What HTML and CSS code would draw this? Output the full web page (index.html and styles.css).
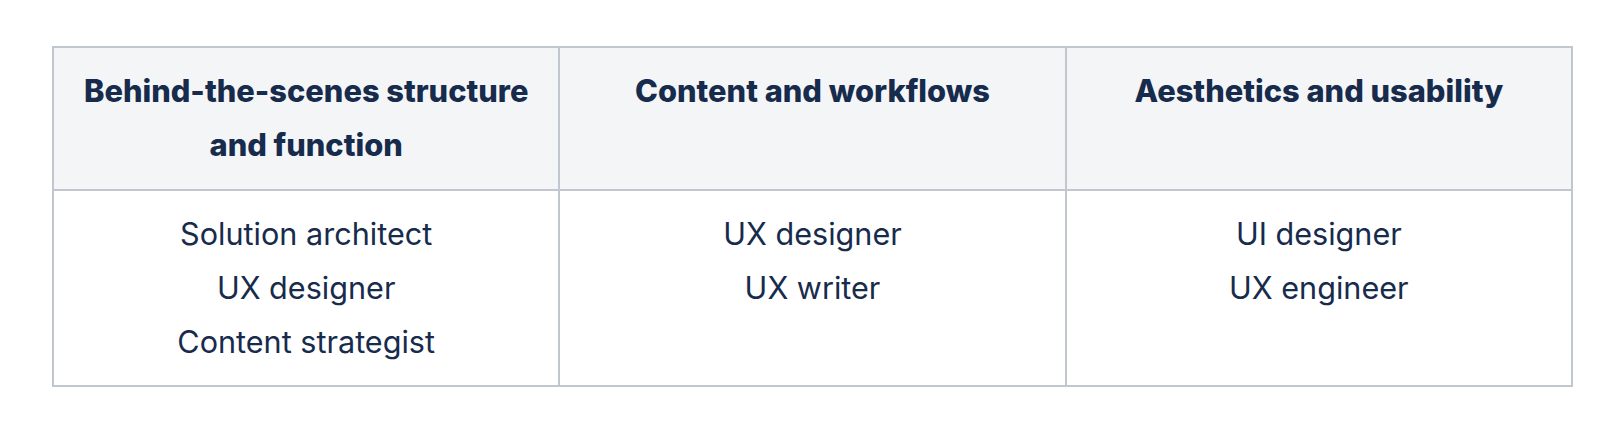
FILE: index.html
```html
<!DOCTYPE html>
<html lang="en">
<head>
<meta charset="utf-8">
<title>Roles table</title>
<link rel="stylesheet" href="styles.css">
</head>
<body>
<div class="page">
  <table class="roles">
    <thead>
      <tr>
        <th>Behind-the-scenes structure and function</th>
        <th>Content and workflows</th>
        <th>Aesthetics and usability</th>
      </tr>
    </thead>
    <tbody>
      <tr>
        <td>
          <p>Solution architect</p>
          <p>UX designer</p>
          <p>Content strategist</p>
        </td>
        <td>
          <p>UX designer</p>
          <p>UX writer</p>
        </td>
        <td>
          <p>UI designer</p>
          <p>UX engineer</p>
        </td>
      </tr>
    </tbody>
  </table>
</div>
</body>
</html>
```

FILE: styles.css
```css
html, body {
  margin: 0;
  padding: 0;
  background: #ffffff;
}

.page {
  padding: 46px 49px 0 52px;
  font-family: Inter, "Noto Sans", "Liberation Sans", sans-serif;
  color: #172b4d;
}

.roles {
  width: 100%;
  border-collapse: collapse;
  table-layout: fixed;
}

.roles th,
.roles td {
  border: 2px solid #c1c7d0;
  padding: 16px 20px;
  text-align: center;
  vertical-align: top;
  line-height: 54px;
}

.roles th {
  background: #f4f5f7;
  font-size: 30.8px;
  font-weight: 800;
  padding-bottom: 17px;
}

.roles td {
  font-size: 30.6px;
  font-weight: 400;
}

.roles p {
  margin: 0;
}
```
